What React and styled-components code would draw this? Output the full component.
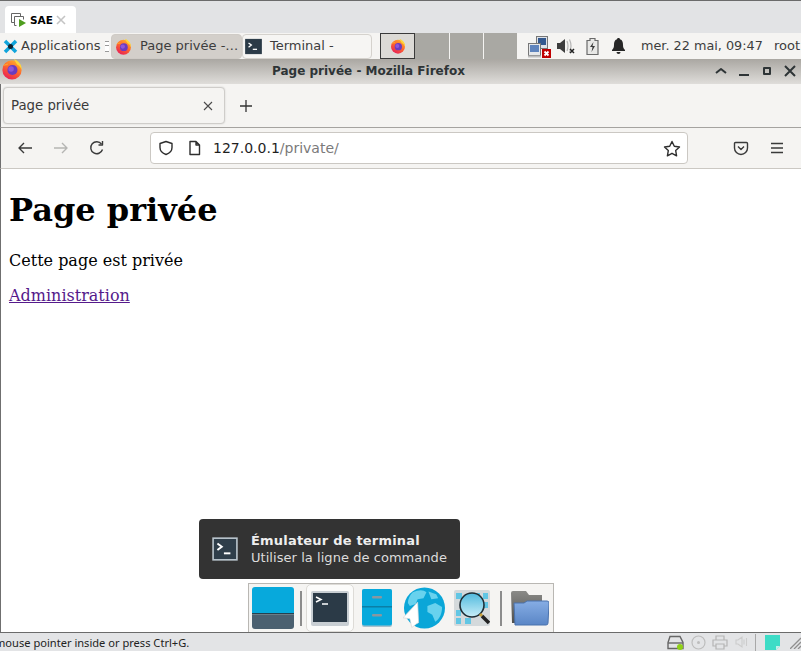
import React from 'react';
import styled, { createGlobalStyle } from 'styled-components';

const GlobalStyle = createGlobalStyle`
    html, body {
        margin: 0;
        padding: 0;
        width: 801px;
        height: 651px;
        overflow: hidden;
        background: #ffffff;
    }
`;

const Screen = styled.div`
    position: relative;
    width: 801px;
    height: 651px;
    display: flex;
    flex-direction: column;
    overflow: hidden;
    font-family: "DejaVu Sans", sans-serif;
    color: #2e3436;
`;

/* virtualbox session tabs */
const SessionStrip = styled.div`
    height: 32px;
    flex: none;
    background: #e2e3e5;
    border-top: 1px solid #6b6b6b;
    display: flex;
    align-items: flex-end;
    padding-left: 5px;
`;
const SessionTab = styled.div`
    width: 71px;
    height: 27px;
    box-sizing: border-box;
    background: #ffffff;
    border-radius: 4px 4px 0 0;
    display: flex;
    align-items: center;
    padding-left: 6px;
    font-size: 10.5px;
    font-weight: bold;
    color: #000000;
`;
const SessionName = styled.span`
    margin-left: 4px;
    width: 26px;
`;

/* xfce panel */
const Panel = styled.div`
    height: 26px;
    flex: none;
    background: #f5f4f2;
    display: flex;
    align-items: center;
    font-size: 13px;
    color: #3d3d3d;
    overflow: hidden;
    white-space: nowrap;
`;
const PanelLabel = styled.span`
    margin-top: -2px;
`;
const AppMenu = styled.div`
    width: 111px;
    flex: none;
    display: flex;
    align-items: center;
    padding-left: 3px;
    box-sizing: border-box;
    gap: 3px;
`;
const Grip = styled.span`
    width: 4px;
    height: 9px;
    margin-left: 2px;
    border-top: 1px solid #999;
    border-bottom: 1px solid #999;
    background: linear-gradient(#fff 3px, #999 3px, #999 4px, #fff 4px);
`;
const WindowButton = styled.div`
    width: ${p => p.$w}px;
    height: 25px;
    flex: none;
    box-sizing: border-box;
    border-radius: 4px;
    border: 1px solid ${p => (p.$active ? '#cfcbc6' : '#d5d2cd')};
    background: ${p => (p.$active ? '#d3cfca' : '#f6f5f3')};
    display: flex;
    align-items: center;
    gap: 8px;
    padding-left: ${p => (p.$active ? 3 : 2)}px;
    margin-right: ${p => p.$gap || 0}px;
`;
const Workspaces = styled.div`
    display: flex;
    height: 26px;
    flex: none;
    width: 137px;
`;
const Workspace = styled.div`
    flex: 1;
    display: flex;
    align-items: center;
    justify-content: center;
    box-sizing: border-box;
    background: ${p => (p.$current ? '#dcdad6' : '#a9a8a3')};
    border: ${p => (p.$current ? '1px solid #3a3a3a' : 'none')};
    border-right: ${p => (p.$current ? '1px solid #3a3a3a' : '1px solid #f5f4f2')};
    &:last-child {
        border-right: none;
    }
`;
const Tray = styled.div`
    display: flex;
    align-items: center;
    padding-left: 11px;
    flex: none;
`;
const TraySlot = styled.div`
    width: ${p => p.$w}px;
    flex: none;
    display: flex;
    align-items: center;
`;
const Clock = styled.span`
    width: 133px;
    flex: none;
    margin-top: -2px;
    font-size: 12.8px;
`;
const User = styled.span`
    margin-top: -2px;
`;

/* firefox window */
const TitleBar = styled.div`
    height: 25px;
    flex: none;
    box-sizing: border-box;
    position: relative;
    background: linear-gradient(#aaa7a2, #dfddda);
    display: flex;
    align-items: center;
    padding: 0 0 2px 272px;
    font-size: 12px;
    font-weight: bold;
    color: #2e3436;
`;
const TitleIcon = styled.div`
    position: absolute;
    left: 1px;
    top: -1px;
`;
const WindowControls = styled.div`
    position: absolute;
    left: 713px;
    top: 5px;
    display: flex;
    gap: 7px;
`;
const TabBar = styled.div`
    height: 44px;
    flex: none;
    box-sizing: border-box;
    background: #f5f4f2;
    border-bottom: 1px solid #a5a3a0;
    border-left: 1px solid #6f6f6f;
    display: flex;
    align-items: center;
    padding-left: 2px;
`;
const BrowserTab = styled.div`
    width: 222px;
    height: 37px;
    box-sizing: border-box;
    background: #f5f4f2;
    border: 1px solid #cfcdca;
    border-radius: 4px;
    box-shadow: 0 0 2px rgba(0, 0, 0, 0.15);
    display: flex;
    align-items: center;
    justify-content: space-between;
    padding: 0 11px 0 7px;
    font-size: 13.3px;
    color: #3a3a3a;
`;
const NewTab = styled.div`
    margin-left: 14px;
    display: flex;
`;
const NavBar = styled.div`
    height: 41px;
    flex: none;
    box-sizing: border-box;
    background: #f5f4f2;
    border-bottom: 1px solid #cbc8c3;
    border-left: 1px solid #6f6f6f;
    display: flex;
    align-items: center;
    padding-left: 16px;
`;
const NavButton = styled.div`
    width: ${p => p.$w || 36}px;
    flex: none;
    display: flex;
`;
const UrlBar = styled.div`
    width: 538px;
    height: 32px;
    box-sizing: border-box;
    margin-left: 24px;
    margin-right: 45px;
    background: #ffffff;
    border: 1px solid #cbc8c3;
    border-radius: 4px;
    display: flex;
    align-items: center;
    padding: 0 6px 0 7px;
    flex: none;
`;
const DocIcon = styled.span`
    display: flex;
    margin-left: 14px;
`;
const UrlText = styled.span`
    margin-left: 12px;
    flex: 1;
    font-size: 14px;
    color: #1f1f1f;
`;
const UrlPath = styled.span`
    color: #7a7a7a;
`;
const Content = styled.main`
    flex: 1;
    min-height: 0;
    background: #ffffff;
    border-left: 1px solid #6f6f6f;
    padding: 0 8px;
    font-family: "DejaVu Serif", serif;
    font-size: 16px;
    color: #000000;
`;
const Heading = styled.h1`
    font-size: 32px;
    margin: 22px 0;
    padding-top: 0.1px;
`;
const Paragraph = styled.p`
    margin: 16px 0;
`;
const PageLink = styled.a`
    color: #551a8b;
    text-decoration: underline;
`;

/* virtualbox status bar */
const StatusBar = styled.div`
    height: 18px;
    flex: none;
    background: #e3e4e6;
    border-top: 1px solid #6b6b6b;
    display: flex;
    align-items: center;
    font-family: "Noto Sans", sans-serif;
    font-size: 11.1px;
    color: #222222;
    position: relative;
    overflow: hidden;
`;
const StatusText = styled.span`
    flex: 1;
    margin-left: -5px;
    white-space: nowrap;
`;
const StatusIcons = styled.div`
    display: flex;
    align-items: center;
    flex: none;
`;
const StatusIcon = styled.span`
    display: flex;
    margin-right: ${p => p.$mr || 0}px;
`;
const StatusDivider = styled.span`
    width: 1px;
    height: 17px;
    margin: 0 9px 0 7px;
    background: #a8a8a8;
`;

/* tooltip and dock float above the page */
const Tooltip = styled.div`
    position: absolute;
    left: 199px;
    top: 519px;
    width: 261px;
    height: 60px;
    box-sizing: border-box;
    background: #333333;
    border-radius: 4px;
    display: flex;
    align-items: center;
    padding-left: 13px;
    gap: 13px;
`;
const TooltipTitle = styled.div`
    font-size: 13px;
    font-weight: bold;
    letter-spacing: 0.2px;
    line-height: 17px;
    color: #eeeeee;
`;
const TooltipHint = styled.div`
    font-size: 13px;
    letter-spacing: 0.05px;
    line-height: 17px;
    color: #dcdcdc;
`;
const Dock = styled.div`
    position: absolute;
    left: 248px;
    top: 583px;
    width: 306px;
    height: 49px;
    box-sizing: border-box;
    background: #f5f4f2;
    border: 1px solid #b9b7b3;
    border-bottom: none;
    display: flex;
    align-items: center;
    padding-left: 3px;
`;
const DockSeparator = styled.span`
    width: 2px;
    height: 35px;
    margin: ${p => p.$m};
    background: #8c8c8c;
    flex: none;
`;
const DockItem = styled.div`
    width: ${p => p.$w}px;
    height: ${p => p.$h || 42}px;
    margin-right: ${p => p.$mr || 0}px;
    flex: none;
    box-sizing: border-box;
    display: flex;
    align-items: center;
    justify-content: center;
    ${p => p.$active && `
        background: #fbfbfa;
        border: 1px solid #dddbd7;
        border-radius: 5px;
        height: 48px;
    `}
`;

const Firefox = ({ size = 16 }) => (
    <svg width={size} height={size} viewBox="0 0 24 24">
        <defs>
            <linearGradient id="ffBody" x1="0.8" y1="0" x2="0.2" y2="1">
                <stop offset="0" stopColor="#ffb52e" />
                <stop offset="0.45" stopColor="#ff6a2b" />
                <stop offset="1" stopColor="#e6195a" />
            </linearGradient>
        </defs>
        <circle cx="12" cy="13" r="10.5" fill="url(#ffBody)" />
        <path d="M14 1c5 2 9 6 8.500 12-1-3-3-5-5-6-1-2-2.500-4-3.500-6z" fill="#ffd63a" />
        <path d="M2 9c1-2 3-3 6-3l-1 2c-2 0-3 .5-5 1z" fill="#ffa02e" />
        <circle cx="12.500" cy="13" r="5.500" fill="#6a3bc0" />
        <circle cx="11" cy="12" r="3" fill="#8f57d8" />
    </svg>
);

const TerminalGlyph = ({ size = 18, bg = '#2b3a47', frame = '#2b3a47', fg = '#ffffff' }) => (
    <svg width={size} height={size} viewBox="0 0 24 24">
        <rect x="1" y="2" width="22" height="20" fill={bg} stroke={frame} strokeWidth="1.500" />
        <path d="M5 7l4 3-4 3" fill="none" stroke={fg} strokeWidth="1.800" />
        <path d="M11 16h6" stroke={fg} strokeWidth="1.800" />
    </svg>
);

const Line = ({ w = 16, h = 16, color = '#3a3a3a', sw = 1.4, children }) => (
    <svg width={w} height={h} viewBox={`0 0 ${w} ${h}`} fill="none" stroke={color} strokeWidth={sw} strokeLinejoin="round">
        {children}
    </svg>
);

const App = () => (
    <Screen>
        <GlobalStyle />
        <SessionStrip>
            <SessionTab>
                <svg width="15" height="15" viewBox="0 0 15 15">
                    <path d="M.5 1.500h9v3" fill="none" stroke="#666" />
                    <path d="M.5 1.500v9h3" fill="none" stroke="#666" />
                    <path d="M3.500 4.500h9v3M3.500 4.500v9h2" fill="none" stroke="#666" />
                    <path d="M8 7l7 4-7 4z" fill="#4f9e1f" />
                </svg>
                <SessionName>SAE</SessionName>
                <Line w={10} h={10} color="#c4c4c4" sw={1.6}><path d="M1 1l8 8M9 1l-8 8" /></Line>
            </SessionTab>
        </SessionStrip>
        <Panel>
            <AppMenu>
                <svg width="15" height="15" viewBox="0 0 15 15">
                    <path d="M2 2l11 11M13 2L2 13" stroke="#11a5dc" strokeWidth="3.500" />
                    <circle cx="7.500" cy="7.500" r="2.500" fill="#10202c" />
                </svg>
                <PanelLabel>Applications</PanelLabel>
                <Grip />
            </AppMenu>
            <WindowButton $active $w={131}>
                <Firefox size={17} />
                <PanelLabel>Page privée -…</PanelLabel>
            </WindowButton>
            <WindowButton $w={130} $gap={8}>
                <TerminalGlyph size={17} />
                <PanelLabel>Terminal -</PanelLabel>
            </WindowButton>
            <Workspaces>
                <Workspace $current><Firefox size={16} /></Workspace>
                <Workspace />
                <Workspace />
                <Workspace />
            </Workspaces>
            <Tray>
                <TraySlot $w={29}>
                    <svg width="23" height="23" viewBox="0 0 23 23">
                        <rect x="8.500" y="1.500" width="11" height="12" fill="#dfe3e8" stroke="#777" />
                        <rect x="10" y="3" width="8" height="7" fill="#34598f" />
                        <rect x=".5" y="8.500" width="12" height="12" fill="#e6e8ea" stroke="#777" />
                        <rect x="2" y="10" width="9" height="7" fill="#5f84bd" />
                        <rect x="0" y="20.500" width="13" height="2" fill="#bdbdbd" />
                        <rect x="14" y="14" width="9" height="9" fill="#c00000" />
                        <path d="M16.500 16.500l4 4M20.500 16.500l-4 4" stroke="#fff" strokeWidth="1.800" />
                    </svg>
                </TraySlot>
                <TraySlot $w={29}>
                    <svg width="19" height="16" viewBox="0 0 19 16">
                        <path d="M0 5h3l5-4v14l-5-4H0z" fill="#3d3d3d" />
                        <path d="M10 3q2 5 0 10M12.500 1.500q3 6.500 0 13" fill="none" stroke="#b5b5b5" strokeWidth="1.200" />
                        <path d="M13 11l4 4M17 11l-4 4" stroke="#222" strokeWidth="1.500" />
                    </svg>
                </TraySlot>
                <TraySlot $w={26}>
                    <svg width="13" height="17" viewBox="0 0 13 17">
                        <path d="M4 .5h5v2h3v14H1v-14h3z" fill="#e8e8e6" stroke="#6a6a6a" strokeWidth="1.200" />
                        <path d="M7.500 4L4 9h2.500L5.500 14 9 8H6.500z" fill="#3a3a3a" />
                    </svg>
                </TraySlot>
                <TraySlot $w={29}>
                    <svg width="13" height="16" viewBox="0 0 13 16">
                        <path d="M6.500 0c1 0 1.500.6 1.500 1.300C10.500 2 11 4.500 11 7c0 2.500.7 3.500 2 5v1H0v-1c1.300-1.500 2-2.500 2-5 0-2.500.5-5 3-5.700C5 .6 5.500 0 6.500 0z" fill="#262626" />
                        <path d="M4.500 14h4a2 2 0 01-4 0z" fill="#262626" />
                    </svg>
                </TraySlot>
                <Clock>mer. 22 mai, 09:47</Clock>
                <User>root</User>
            </Tray>
        </Panel>
        <TitleBar>
            <TitleIcon><Firefox size={22} /></TitleIcon>
            Page privée - Mozilla Firefox
            <WindowControls>
                <Line w={16} h={14} color="#2e3436" sw={2}><path d="M3 9l5-4 5 4" /></Line>
                <Line w={16} h={14} color="#2e3436" sw={2}><path d="M3 11h10" /></Line>
                <Line w={16} h={14} color="#2e3436" sw={2}><rect x="5" y="4" width="6" height="6" /></Line>
                <Line w={16} h={14} color="#2e3436" sw={2}><path d="M3 2l10 10M13 2L3 12" /></Line>
            </WindowControls>
        </TitleBar>
        <TabBar>
            <BrowserTab>
                Page privée
                <Line w={10} h={10} color="#4a4a4a" sw={1.1}><path d="M1 1l8 8M9 1L1 9" /></Line>
            </BrowserTab>
            <NewTab>
                <Line w={14} h={14} color="#333" sw={1.3}><path d="M7 1v12M1 7h12" /></Line>
            </NewTab>
        </TabBar>
        <NavBar>
            <NavButton>
                <Line color="#3a3a3a"><path d="M15 8H2M7 3L2 8l5 5" /></Line>
            </NavButton>
            <NavButton>
                <Line color="#b5b5b3"><path d="M1 8h13M9 3l5 5-5 5" /></Line>
            </NavButton>
            <NavButton $w={37}>
                <Line color="#3a3a3a"><path d="M13.500 9.500A6 6 0 1112.500 4" /><path d="M13.500 1v4h-4" /></Line>
            </NavButton>
            <UrlBar>
                <Line color="#2e2e2e"><path d="M8 1.500l6 2v4c0 3.500-2.500 5.800-6 7-3.500-1.200-6-3.500-6-7v-4z" /></Line>
                <DocIcon>
                    <Line w={13} h={16} color="#2e2e2e"><path d="M2 1.500h6l3.500 3.500v9.500H2zM8 1.500V5h3.500" /></Line>
                </DocIcon>
                <UrlText>127.0.0.1<UrlPath>/private/</UrlPath></UrlText>
                <Line w={18} h={17} color="#2e2e2e"><path d="M9 1.500l2.300 4.800 5.200.7-3.800 3.600.9 5.200L9 13.300l-4.600 2.500.9-5.200L1.500 7l5.200-.7z" /></Line>
            </UrlBar>
            <NavButton $w={36}>
                <Line color="#3a3a3a"><path d="M2.500 2.500h11a1 1 0 011 1V8a6.500 6.500 0 01-13 0V3.500a1 1 0 011-1z" /><path d="M5 6.500L8 9.500l3-3" /></Line>
            </NavButton>
            <NavButton>
                <Line color="#3a3a3a"><path d="M2 3.500h12M2 8h12M2 12.500h12" /></Line>
            </NavButton>
        </NavBar>
        <Content>
            <Heading>Page privée</Heading>
            <Paragraph>Cette page est privée</Paragraph>
            <Paragraph><PageLink href="#admin">Administration</PageLink></Paragraph>
        </Content>
        <StatusBar>
            <StatusText>mouse pointer inside or press Ctrl+G.</StatusText>
            <StatusIcons>
                <StatusIcon $mr={6}>
                    <svg width="18" height="15" viewBox="0 0 18 15">
                        <path d="M3 1.500h10l3 6v6H1v-6z" fill="none" stroke="#666" strokeWidth="1.400" />
                        <path d="M1 8h15" stroke="#666" strokeWidth="1.400" />
                        <circle cx="13" cy="12" r="3" fill="#8fd016" />
                    </svg>
                </StatusIcon>
                <StatusIcon $mr={6}>
                    <svg width="15" height="15" viewBox="0 0 15 15">
                        <circle cx="7.500" cy="7.500" r="6.500" fill="none" stroke="#bdbdbd" strokeWidth="1.200" />
                        <circle cx="7.500" cy="7.500" r="1.500" fill="#bdbdbd" />
                    </svg>
                </StatusIcon>
                <StatusIcon $mr={7}>
                    <svg width="16" height="15" viewBox="0 0 16 15">
                        <path d="M4 5V1h8v4M4 11H1V5h14v6h-3M4 9h8v5H4z" fill="none" stroke="#b5b5b5" strokeWidth="1.200" />
                    </svg>
                </StatusIcon>
                <StatusIcon>
                    <svg width="13" height="14" viewBox="0 0 13 14">
                        <path d="M1 5h2l4-3v10l-4-3H1zM9 4.500v5M11.500 3v8" fill="none" stroke="#cccccc" strokeWidth="1.100" />
                    </svg>
                </StatusIcon>
                <StatusDivider />
                <StatusIcon $mr={10}>
                    <svg width="15" height="15" viewBox="0 0 15 15">
                        <path d="M0 0h15v11l-4 4H0z" fill="#3ddcc6" />
                        <path d="M15 11h-4v4z" fill="#bff1ea" />
                    </svg>
                </StatusIcon>
                <StatusIcon>
                    <svg width="11" height="14" viewBox="0 0 11 14">
                        <path d="M0 14L11 3M4 14l7-7M8 14l3-3" stroke="#8f8f8f" strokeWidth="1.300" />
                    </svg>
                </StatusIcon>
            </StatusIcons>
        </StatusBar>
        <Tooltip>
            <TerminalGlyph size={26} bg="#2f3e4a" frame="#b9c4cc" />
            <div>
                <TooltipTitle>Émulateur de terminal</TooltipTitle>
                <TooltipHint>Utiliser la ligne de commande</TooltipHint>
            </div>
        </Tooltip>
        <Dock>
            <DockItem $w={42}>
                <svg width="42" height="42" viewBox="0 0 42 42">
                    <path d="M3 0h36a3 3 0 013 3v24H0V3a3 3 0 013-3z" fill="#07a9dc" />
                    <rect y="26" width="42" height="1.500" fill="#25404f" />
                    <path d="M0 27.500h42V39a3 3 0 01-3 3H3a3 3 0 01-3-3z" fill="#4b6070" />
                </svg>
            </DockItem>
            <DockSeparator $m="0 4px 0 6px" />
            <DockItem $w={48} $active $mr={7}>
                <svg width="38" height="35" viewBox="0 0 38 35">
                    <rect width="38" height="35" rx="2" fill="#c8ced3" />
                    <rect x="2" y="2" width="34" height="29" fill="#2b3a47" />
                    <path d="M5 6l5 2.500L5 11" fill="none" stroke="#fff" strokeWidth="1.500" />
                    <path d="M11 13h6" stroke="#fff" strokeWidth="1.500" />
                </svg>
            </DockItem>
            <DockItem $w={31} $mr={11}>
                <svg width="30" height="38" viewBox="0 0 30 38">
                    <rect width="30" height="38" rx="2" fill="#a9c0cc" />
                    <rect width="30" height="36.500" rx="2" fill="#07a9dc" />
                    <rect y="17" width="30" height="1.500" fill="#0b7fa6" />
                    <rect x="10" y="7" width="10" height="2.500" rx="1" fill="#8a979f" />
                    <rect x="10" y="25" width="10" height="2.500" rx="1" fill="#8a979f" />
                </svg>
            </DockItem>
            <DockItem $w={42} $mr={9}>
                <svg width="43" height="42" viewBox="0 0 43 42">
                    <circle cx="22" cy="21" r="21" fill="#0aa6d8" />
                    <path d="M10 5c6-3 11-3 14 0l-3 6-6 1-2 5-6 2-2-3c0-4 2-8 5-11zM25 19l8-3 7 4c0 6-2 12-7 15l-3-7-5-3zM26 4l8 3 2 4-7 1z" fill="#68d2ee" />
                    <path d="M15 15L0 31l7 1 2 9 5-4 2-1z" fill="#ffffff" stroke="#d6d6d6" strokeWidth="0.700" />
                </svg>
            </DockItem>
            <DockItem $w={36}>
                <svg width="36" height="36" viewBox="0 0 36 36">
                    <defs>
                        <linearGradient id="lens" x1="0" y1="0" x2="0" y2="1">
                            <stop offset="0" stopColor="#4fb9dd" />
                            <stop offset="1" stopColor="#c8eef8" />
                        </linearGradient>
                    </defs>
                    <rect width="36" height="36" rx="2" fill="#d4d9db" />
                    <path d="M2 3h6v6H2zM20 3h6v6h-6zM29 3h5v6h-5zM29 12h5v6h-5zM2 20h5v6H2zM2 28h5v6H2zM11 28h6v6h-6z" fill="#62c6e4" />
                    <circle cx="18" cy="15" r="12" fill="url(#lens)" stroke="#1f2d35" strokeWidth="1.600" />
                    <path d="M26 24l2 2" stroke="#c9a23a" strokeWidth="3" />
                    <path d="M28 26l7 7" stroke="#222" strokeWidth="3.500" />
                </svg>
            </DockItem>
            <DockSeparator $m="0 9px 0 10px" />
            <DockItem $w={38}>
                <svg width="38" height="35" viewBox="0 0 38 35">
                    <defs>
                        <linearGradient id="folderBack" x1="0" y1="0" x2="0" y2="1">
                            <stop offset="0" stopColor="#8a8a87" />
                            <stop offset="1" stopColor="#4f4f4d" />
                        </linearGradient>
                        <linearGradient id="folderFront" x1="0" y1="0" x2="0" y2="1">
                            <stop offset="0" stopColor="#86ade4" />
                            <stop offset="1" stopColor="#5a86c6" />
                        </linearGradient>
                    </defs>
                    <path d="M0 2a2 2 0 012-2h13l3 4h13v28H1z" fill="url(#folderBack)" />
                    <path d="M3 12h10l3-2h20a2 2 0 012 2l-1 20a2 2 0 01-2 2H4z" fill="url(#folderFront)" stroke="#4a72ad" />
                </svg>
            </DockItem>
        </Dock>
    </Screen>
);

export default App;
